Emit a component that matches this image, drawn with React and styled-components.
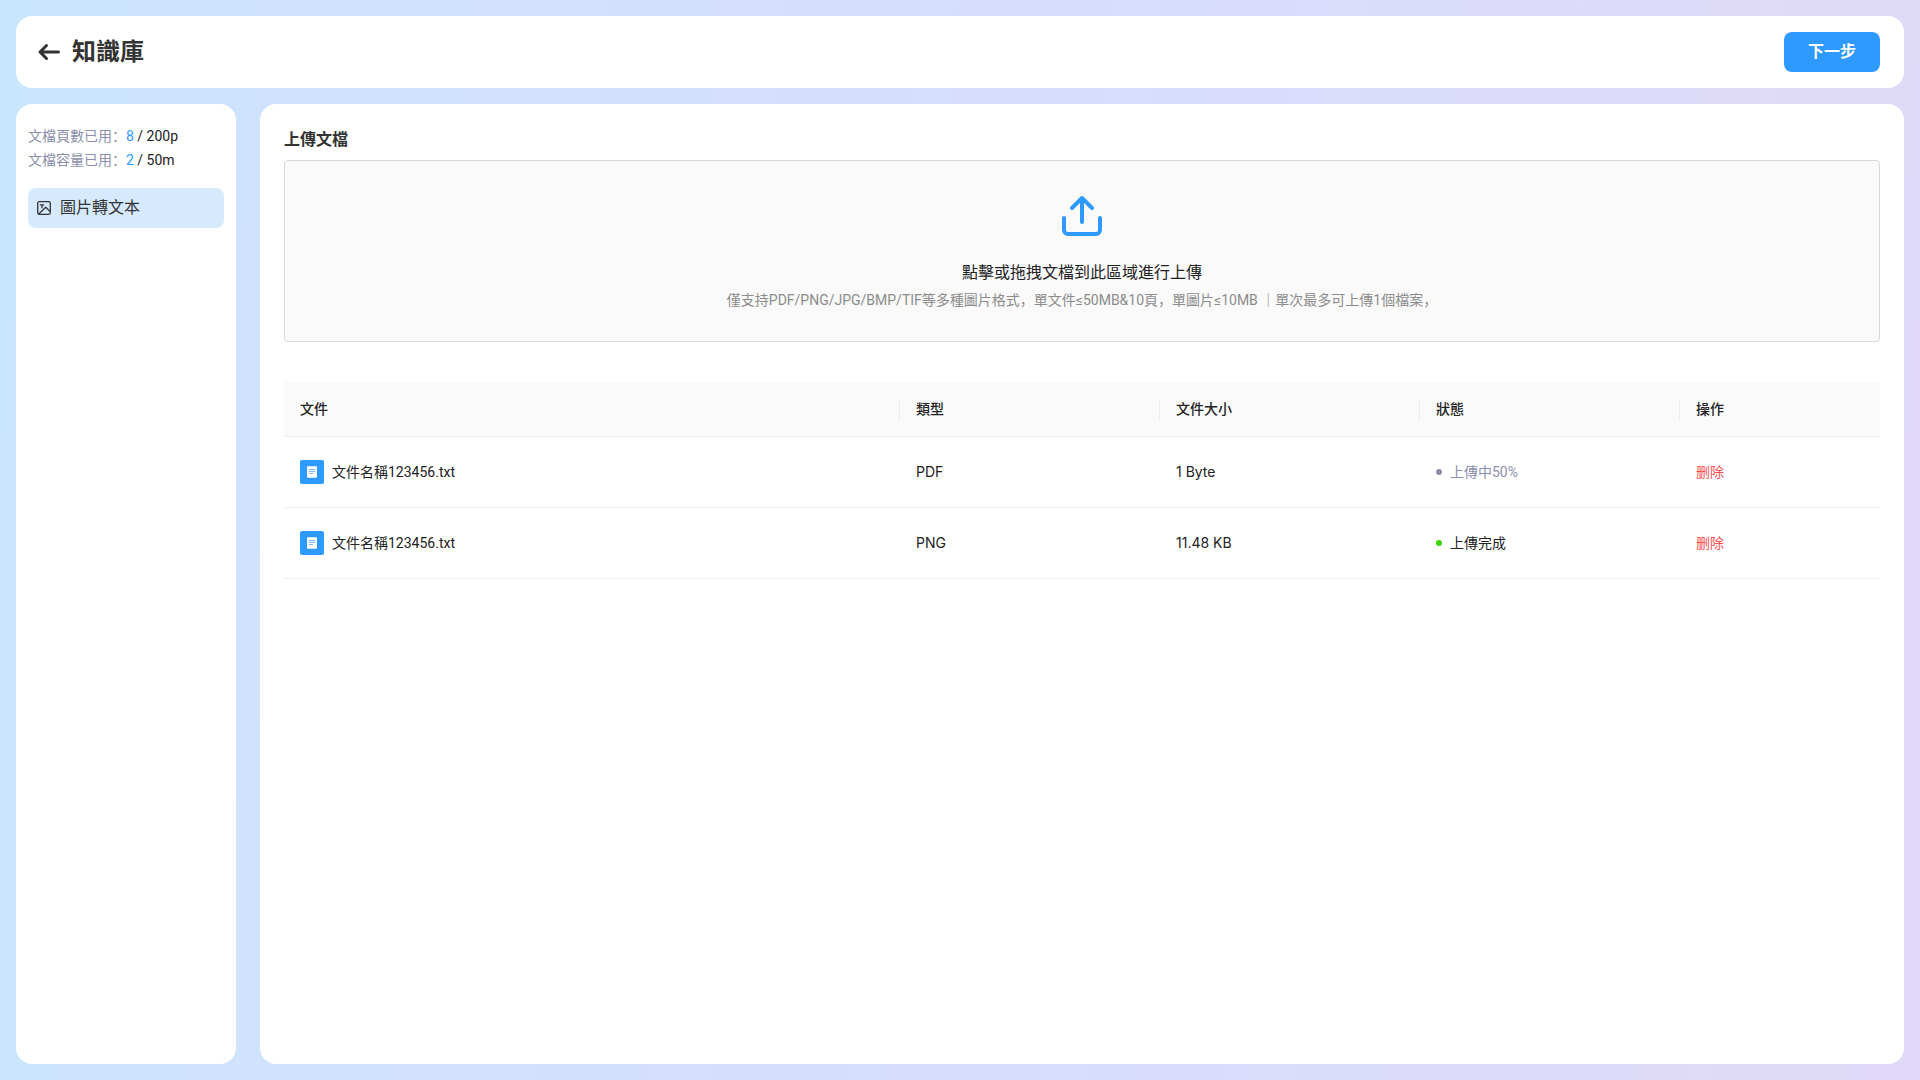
import React from "react";
import styled, { createGlobalStyle } from "styled-components";

const GlobalStyle = createGlobalStyle`
  * {
    box-sizing: border-box;
  }
  body {
    margin: 0;
    font-family: Roboto, "Noto Sans CJK SC", sans-serif;
    font-size: 14px;
    line-height: 22px;
    color: #222;
  }
  button {
    font-family: inherit;
    cursor: pointer;
  }
`;

const Page = styled.div`
  min-height: 100vh;
  padding: 16px;
  display: flex;
  flex-direction: column;
  gap: 16px;
  background: linear-gradient(94deg, #cae6ff 0%, #cfe2fe 15%, #d6defc 50%, #dfdaf8 92%, #e0d8f8 100%);
`;

const Header = styled.header`
  display: flex;
  align-items: center;
  justify-content: space-between;
  height: 72px;
  padding: 0 24px 0 20px;
  border-radius: 16px;
  background: #fff;
`;

const HeaderLeft = styled.div`
  display: flex;
  align-items: center;
  gap: 8px;
`;

const BackButton = styled.button`
  display: flex;
  padding: 0;
  border: none;
  background: none;
`;

const Title = styled.h1`
  margin: 0;
  font-size: 24px;
  line-height: 32px;
  font-weight: 700;
  color: #333;
`;

const NextButton = styled.button`
  height: 40px;
  padding: 0 24px 4px;
  border: none;
  border-radius: 8px;
  background: #2e99ff;
  color: #fff;
  font-size: 16px;
  font-weight: 700;
`;

const Body = styled.div`
  flex: 1;
  display: flex;
  gap: 24px;
`;

const Sidebar = styled.aside`
  flex: 0 0 220px;
  padding: 20px 12px;
  border-radius: 16px;
  background: #fff;
`;

const Quota = styled.p`
  margin: 0;
  display: flex;
  line-height: 24px;
  white-space: pre;
`;

const QuotaLabel = styled.span`
  color: #8b8fad;
`;

const QuotaUsed = styled.span`
  color: #2e99ff;
`;

const MenuItem = styled.button`
  display: flex;
  align-items: center;
  gap: 8px;
  width: 100%;
  height: 40px;
  margin-top: 16px;
  padding: 0 8px;
  border: none;
  border-radius: 8px;
  background: #d5eaff;
  color: #333;
  font-size: 16px;
`;

const MenuLabel = styled.span`
  padding-bottom: 4px;
`;

const Main = styled.main`
  flex: 1;
  min-width: 0;
  padding: 24px;
  border-radius: 16px;
  background: #fff;
`;

const SectionTitle = styled.h2`
  margin: 0 0 8px;
  font-size: 16px;
  line-height: 24px;
  font-weight: 700;
  color: #333;
`;

const UploadArea = styled.button`
  display: flex;
  flex-direction: column;
  align-items: center;
  width: 100%;
  height: 182px;
  padding: 32px 16px 0;
  border: 1px solid #d9d9d9;
  border-radius: 4px;
  background: #fafafa;
`;

const UploadTitle = styled.span`
  margin-top: 20px;
  font-size: 16px;
  line-height: 24px;
  color: #222;
`;

const UploadHint = styled.span`
  margin-top: 4px;
  font-size: 14px;
  line-height: 22px;
  color: #8c8c8c;
`;

const Table = styled.table`
  width: 100%;
  margin-top: 40px;
  table-layout: fixed;
  border-collapse: separate;
  border-spacing: 0;
`;

const Th = styled.th`
  position: relative;
  width: ${(props) => props.$width || "auto"};
  height: 55px;
  padding: 0 16px;
  border-bottom: 1px solid #ebebeb;
  background: #fafafa;
  font-weight: 500;
  text-align: left;

  &:not(:last-child)::after {
    content: "";
    position: absolute;
    top: 17px;
    right: 0;
    width: 1px;
    height: 22px;
    background: #ebebeb;
  }
`;

const Td = styled.td`
  height: 71px;
  padding: 0 16px;
  border-bottom: 1px solid #f0f0f0;
`;

const PlainTd = styled(Td)`
  font-family: Inter, "Noto Sans CJK SC", sans-serif;
`;

const FileCell = styled.div`
  display: flex;
  align-items: center;
  gap: 8px;
`;

const Status = styled.span`
  display: flex;
  align-items: center;
  gap: 8px;
  color: ${(props) => (props.$done ? "#222" : "#8b8fad")};

  &::before {
    content: "";
    width: 6px;
    height: 6px;
    border-radius: 50%;
    background: ${(props) => (props.$done ? "#3fd500" : "#8b8fad")};
  }
`;

const DeleteButton = styled.button`
  padding: 0;
  border: none;
  background: none;
  color: #ff4d4f;
  font-size: 14px;
  line-height: 22px;
`;

const BackIcon = () => (
  <svg width="28" height="28" viewBox="0 0 28 28" fill="none" stroke="#333" strokeWidth="3" strokeLinecap="round" strokeLinejoin="round">
    <path d="M22.5 14H5M10.5 7.5L4 14l6.5 6.5" />
  </svg>
);

const PictureIcon = () => (
  <svg width="16" height="16" viewBox="0 0 16 16" fill="none" stroke="#333" strokeWidth="1.3" strokeLinecap="round" strokeLinejoin="round">
    <rect x="1.7" y="1.7" width="12.6" height="12.6" rx="1.5" />
    <path d="M4.3 4.8h3.4M6 4.8v3M3 13.8l6.8-6.6 4.2 4.2" />
  </svg>
);

const UploadIcon = () => (
  <svg width="48" height="48" viewBox="0 0 48 48" fill="none" stroke="#2e99ff" strokeWidth="4" strokeLinecap="round" strokeLinejoin="round">
    <path d="M24 29V6M14 15L24 5l10 10M6 25v12a4 4 0 0 0 4 4h28a4 4 0 0 0 4-4V25" />
  </svg>
);

const FileIcon = () => (
  <svg width="24" height="24" viewBox="0 0 24 24">
    <rect width="24" height="24" rx="2" fill="#2e99ff" />
    <rect x="7" y="6.3" width="10" height="11.4" rx="1" fill="#fff" />
    <path d="M9 9.5h6M9 11.5h6M9 13.5h4" stroke="#7abdff" strokeWidth="1" />
  </svg>
);

const quotas = [
  { label: "文檔頁數已用：", used: "8", total: "200p" },
  { label: "文檔容量已用：", used: "2", total: "50m" },
];

const files = [
  { id: 1, name: "文件名稱123456.txt", type: "PDF", size: "1 Byte", status: "上傳中50%", done: false },
  { id: 2, name: "文件名稱123456.txt", type: "PNG", size: "11.48 KB", status: "上傳完成", done: true },
];

export default function App() {
  return (
    <Page>
      <GlobalStyle />
      <Header>
        <HeaderLeft>
          <BackButton aria-label="返回">
            <BackIcon />
          </BackButton>
          <Title>知識庫</Title>
        </HeaderLeft>
        <NextButton>下一步</NextButton>
      </Header>
      <Body>
        <Sidebar>
          {quotas.map((quota) => (
            <Quota key={quota.label}>
              <QuotaLabel>{quota.label}</QuotaLabel>
              <QuotaUsed>{quota.used}</QuotaUsed>
              <span> / {quota.total}</span>
            </Quota>
          ))}
          <MenuItem>
            <PictureIcon />
            <MenuLabel>圖片轉文本</MenuLabel>
          </MenuItem>
        </Sidebar>
        <Main>
          <SectionTitle>上傳文檔</SectionTitle>
          <UploadArea>
            <UploadIcon />
            <UploadTitle>點擊或拖拽文檔到此區域進行上傳</UploadTitle>
            <UploadHint>
              僅支持PDF/PNG/JPG/BMP/TIF等多種圖片格式，單文件≤50MB&10頁，單圖片≤10MB ｜單次最多可上傳1個檔案，
            </UploadHint>
          </UploadArea>
          <Table>
            <thead>
              <tr>
                <Th>文件</Th>
                <Th $width="260px">類型</Th>
                <Th $width="260px">文件大小</Th>
                <Th $width="260px">狀態</Th>
                <Th $width="200px">操作</Th>
              </tr>
            </thead>
            <tbody>
              {files.map((file) => (
                <tr key={file.id}>
                  <Td>
                    <FileCell>
                      <FileIcon />
                      {file.name}
                    </FileCell>
                  </Td>
                  <PlainTd>{file.type}</PlainTd>
                  <PlainTd>{file.size}</PlainTd>
                  <Td>
                    <Status $done={file.done}>{file.status}</Status>
                  </Td>
                  <Td>
                    <DeleteButton>删除</DeleteButton>
                  </Td>
                </tr>
              ))}
            </tbody>
          </Table>
        </Main>
      </Body>
    </Page>
  );
}
